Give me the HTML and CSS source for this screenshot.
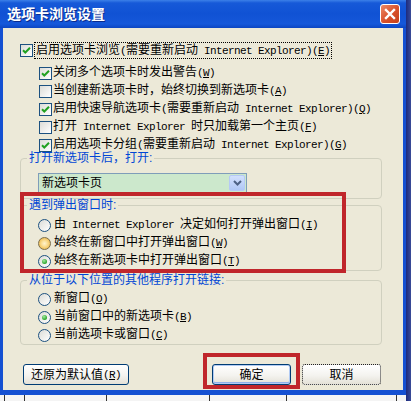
FILE: index.html
```html
<!DOCTYPE html>
<html lang="zh-CN">
<head>
<meta charset="utf-8">
<title>选项卡浏览设置</title>
<link rel="stylesheet" href="styles.css">
</head>
<body>
<div class="screen">
  <div class="window">
    <div class="titlebar">
      <span class="title">选项卡浏览设置</span>
      <span class="close"><svg width="12" height="12" viewBox="0 0 12 12"><path d="M2 2L10 10M10 2L2 10" stroke="#fff" stroke-width="2.4" stroke-linecap="square"/></svg></span>
    </div>
    <div class="frame">
      <div class="content">
        <div class="row top">
          <span class="cb"><svg width="11" height="11" viewBox="0 0 11 11"><path d="M2 5.2L4.3 7.5L9 2.8" stroke="#21A121" stroke-width="2" fill="none"/></svg></span>
          <span class="lbl focus">启用选项卡浏览<span class="e">(</span>需要重新启动<span class="e"> Internet Explorer)(<u>E</u>)</span></span>
        </div>
        <div class="sub">
          <div class="row">
            <span class="cb"><svg width="11" height="11" viewBox="0 0 11 11"><path d="M2 5.2L4.3 7.5L9 2.8" stroke="#21A121" stroke-width="2" fill="none"/></svg></span>
            <span class="lbl">关闭多个选项卡时发出警告<span class="e">(<u>W</u>)</span></span>
          </div>
          <div class="row">
            <span class="cb"></span>
            <span class="lbl">当创建新选项卡时，始终切换到新选项卡<span class="e">(<u>A</u>)</span></span>
          </div>
          <div class="row">
            <span class="cb"><svg width="11" height="11" viewBox="0 0 11 11"><path d="M2 5.2L4.3 7.5L9 2.8" stroke="#21A121" stroke-width="2" fill="none"/></svg></span>
            <span class="lbl">启用快速导航选项卡<span class="e">(</span>需要重新启动<span class="e"> Internet Explorer)(<u>Q</u>)</span></span>
          </div>
          <div class="row">
            <span class="cb"></span>
            <span class="lbl">打开<span class="e"> Internet Explorer </span>时只加载第一个主页<span class="e">(<u>F</u>)</span></span>
          </div>
          <div class="row">
            <span class="cb"><svg width="11" height="11" viewBox="0 0 11 11"><path d="M2 5.2L4.3 7.5L9 2.8" stroke="#21A121" stroke-width="2" fill="none"/></svg></span>
            <span class="lbl">启用选项卡分组<span class="e">(</span>需要重新启动<span class="e"> Internet Explorer)(<u>G</u>)</span></span>
          </div>
        </div>

        <fieldset class="grp g1">
          <legend>打开新选项卡后，打开:</legend>
          <div class="combo">
            <span>新选项卡页</span>
            <span class="arrow"><svg width="9" height="6" viewBox="0 0 9 6"><path d="M1 1L4.5 4.5L8 1" stroke="#4D6185" stroke-width="2" fill="none"/></svg></span>
          </div>
        </fieldset>

        <fieldset class="grp g2">
          <legend>遇到弹出窗口时:</legend>
          <div class="radios">
            <div class="row"><span class="rd"></span><span class="rl">由<span class="e"> Internet Explorer </span>决定如何打开弹出窗口<span class="e">(<u>I</u>)</span></span></div>
            <div class="row"><span class="rd hot"></span><span class="rl">始终在新窗口中打开弹出窗口<span class="e">(<u>W</u>)</span></span></div>
            <div class="row"><span class="rd on"></span><span class="rl">始终在新选项卡中打开弹出窗口<span class="e">(<u>T</u>)</span></span></div>
          </div>
        </fieldset>

        <fieldset class="grp g3">
          <legend>从位于以下位置的其他程序打开链接:</legend>
          <div class="radios">
            <div class="row"><span class="rd"></span><span class="rl">新窗口<span class="e">(<u>O</u>)</span></span></div>
            <div class="row"><span class="rd on"></span><span class="rl">当前窗口中的新选项卡<span class="e">(<u>B</u>)</span></span></div>
            <div class="row"><span class="rd"></span><span class="rl">当前选项卡或窗口<span class="e">(<u>C</u>)</span></span></div>
          </div>
        </fieldset>

        <div class="btns">
          <span class="btn b-reset">还原为默认值<span class="e">(<u>R</u>)</span></span>
          <span class="btn b-ok">确定</span>
          <span class="btn b-cancel">取消</span>
        </div>

        <div class="mark m1"></div>
        <div class="mark m2"></div>
      </div>
    </div>
  </div>
  <div class="rstrip"></div>
  <div class="bstrip">
    <span class="cell" style="width:5px"></span>
    <span class="cell" style="width:20px"></span>
    <span class="cell" style="width:82px"></span>
    <span class="cell" style="width:103px"></span>
    <span class="cell" style="width:77px"></span>
    <span class="cell" style="width:110px"></span>
    <span class="cell last"></span>
  </div>
</div>
</body>
</html>
```
FILE: styles.css
```css
* { box-sizing: border-box; margin: 0; padding: 0; }
html, body { width: 411px; height: 401px; overflow: hidden; }
body {
  background: #1F2C7A;
  font-family: "Liberation Sans", "Noto Sans CJK SC", sans-serif;
  font-size: 12px;
  color: #000;
}
.screen {
  display: grid;
  grid-template-columns: 406px 5px;
  grid-template-rows: 395px 6px;
  width: 411px;
  height: 401px;
}
.window { grid-column: 1; grid-row: 1; display: flex; flex-direction: column; }
.titlebar {
  height: 28px;
  flex: none;
  display: flex;
  align-items: center;
  justify-content: space-between;
  padding: 0 6px 0 7px;
  background: linear-gradient(#3C80E8 0, #1659D8 3px, #1052D4 14px, #1558DA 24px, #0C46C2 28px);
}
.title {
  color: #fff;
  font-weight: bold;
  font-size: 14px;
  line-height: 16px;
  text-shadow: 1px 1px #0B2B8C;
}
.close {
  width: 20px;
  height: 20px;
  border: 1px solid #fff;
  border-radius: 3px;
  background: linear-gradient(135deg, #EC8A68, #D8502A 55%, #C4401C);
  display: flex;
  align-items: center;
  justify-content: center;
}
.frame {
  flex: 1;
  border: solid #1450D2;
  border-width: 0 3px 5px;
  background: #ECE9D8;
}
.content {
  position: relative;
  height: 362px;
  padding: 14px 21px 0 17px;
}
.row { display: flex; align-items: center; height: 18px; }
.row.top { height: 16px; }
.sub { margin-top: 6px; padding-left: 19px; }
.cb {
  width: 13px;
  height: 13px;
  flex: none;
  border: 1px solid #1C5180;
  background: linear-gradient(135deg, #DCDCD7, #FFFFFF);
  display: flex;
  align-items: center;
  justify-content: center;
}
.lbl { margin-left: 1px; line-height: 13px; white-space: nowrap; }
.focus { border: 1px dotted #000; padding: 0 1px; line-height: 14px; }
.e { font-family: "Liberation Mono", monospace; font-size: 11px; letter-spacing: -0.6px; }

.grp {
  border: 1px solid #D0D0BF;
  border-radius: 4px;
  padding: 0 0 0 6px;
  min-width: 0;
}
.grp legend {
  color: #0046D5;
  padding: 0 2px;
  line-height: 12px;
}
.g1 { margin-top: -2px; padding-top: 8px; padding-bottom: 5px; }
.g1 legend { line-height: 13px; }
.g2 { padding-top: 5px; }
.g3 { margin-top: 3px; padding-top: 4px; }

.combo {
  margin-left: 11px;
  width: 209px;
  height: 20px;
  border: 1px solid #7F9DB9;
  background: #CCE8CC;
  display: flex;
  align-items: center;
  justify-content: space-between;
  padding: 0 1px 0 3px;
  line-height: 14px;
}
.arrow {
  width: 16px;
  height: 16px;
  border-radius: 2px;
  border: 1px solid #B5C9F5;
  background: linear-gradient(#D2E0FD, #B0C7F6);
  display: flex;
  align-items: center;
  justify-content: center;
}
.radios { margin-left: 11px; }
.rd {
  width: 13px;
  height: 13px;
  flex: none;
  border-radius: 50%;
  border: 1px solid #1C5180;
  background: linear-gradient(135deg, #DCDCD7, #FFFFFF);
  display: flex;
  align-items: center;
  justify-content: center;
}
.rd.on::after {
  content: "";
  width: 5px;
  height: 5px;
  border-radius: 50%;
  background: radial-gradient(circle at 40% 35%, #A2E8A0, #21A121 75%);
}
.rd.hot {
  border-color: #7C6F4C;
  background: radial-gradient(circle, #FFF2CC 0, #FBE3A0 30%, #F1C35E 70%, #E3AA45 100%);
}
.rl { margin-left: 3px; line-height: 13px; white-space: nowrap; }

.btns {
  display: flex;
  margin-top: 19px;
  height: 21px;
  padding-left: 3px;
  padding-right: 1px;
}
.btn {
  height: 21px;
  border: 1px solid #003C74;
  border-radius: 3px;
  background: linear-gradient(#FFFFFF, #F4F3EF 55%, #E4E1D7);
  display: flex;
  align-items: center;
  justify-content: center;
  line-height: 14px;
  white-space: nowrap;
}
.b-reset { width: 106px; }
.b-ok { width: 79px; margin-left: auto; box-shadow: inset 0 0 0 1px #B2CBF3, inset 0 -1px 0 1px #8FB0EA; }
.b-cancel { width: 79px; margin-left: 11px; border: 1px dotted #222; }

.mark { position: absolute; border: 4px solid #C0262B; }
.m1 { left: 17px; top: 164px; width: 326px; height: 81px; }
.m2 { left: 200px; top: 325px; width: 97px; height: 36px; }

.rstrip {
  grid-column: 2;
  grid-row: 1 / 3;
  background: linear-gradient(90deg, #1C2B7E, #3A4B98);
}
.bstrip {
  grid-column: 1;
  grid-row: 2;
  background: #F4F4F4;
  display: flex;
}
.cell { height: 6px; border-right: 1px solid #333; flex: none; }
.cell.last { border-right: 0; flex: 1; }
```
